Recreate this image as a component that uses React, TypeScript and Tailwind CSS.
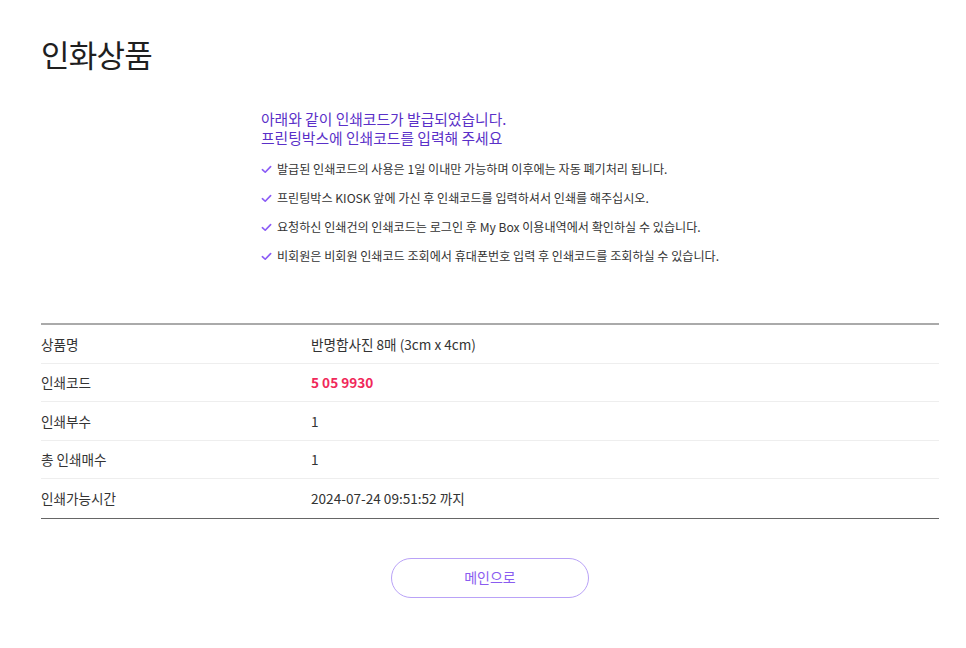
import React from 'react';

const notices = [
    '발급된 인쇄코드의 사용은 1일 이내만 가능하며 이후에는 자동 폐기처리 됩니다.',
    '프린팅박스 KIOSK 앞에 가신 후 인쇄코드를 입력하셔서 인쇄를 해주십시오.',
    '요청하신 인쇄건의 인쇄코드는 로그인 후 My Box 이용내역에서 확인하실 수 있습니다.',
    '비회원은 비회원 인쇄코드 조회에서 휴대폰번호 입력 후 인쇄코드를 조회하실 수 있습니다.',
];

const rows: { label: string; value: string; highlight?: boolean }[] = [
    { label: '상품명', value: '반명함사진 8매 (3cm x 4cm)' },
    { label: '인쇄코드', value: '5 05 9930', highlight: true },
    { label: '인쇄부수', value: '1' },
    { label: '총 인쇄매수', value: '1' },
    { label: '인쇄가능시간', value: '2024-07-24 09:51:52 까지' },
];

const Check = () => (
    <svg viewBox="0 0 12 12" className="w-[11px] h-[11px] flex-shrink-0 mt-[1px]" fill="none">
        <path d="M1.5 6.2 L4.6 9 L10.5 2.8" stroke="#8b5cf6" strokeWidth="1.8" strokeLinecap="round" strokeLinejoin="round" />
    </svg>
);

export default function App() {
    return (
        <div className="min-h-screen bg-white text-[#222] font-['Noto_Sans_CJK_KR','Noto_Sans',sans-serif]">
            <div className="ml-[41px] w-[898px] pt-[33px]">
                {/* Title */}
                <h1 className="text-[31px] font-[420] leading-[42px] tracking-tight text-[#1f1f1f]">인화상품</h1>

                {/* Notice */}
                <div className="mx-auto w-fit mt-[34px]">
                    <p className="text-[14.8px] leading-[19px] text-[#5a30c8]">
                        아래와 같이 인쇄코드가 발급되었습니다.
                        <br />
                        프린팅박스에 인쇄코드를 입력해 주세요
                    </p>
                    <ul className="mt-[13px] flex flex-col gap-[11px]">
                        {notices.map((n, i) => (
                            <li key={i} className="flex items-center gap-[5px] text-[12.1px] leading-[18px] text-[#333]">
                                <Check />
                                <span>{n}</span>
                            </li>
                        ))}
                    </ul>
                </div>

                {/* Detail table */}
                <div className="mt-[58px] border-t-2 border-[#aaa] border-b border-b-[#666]">
                    {rows.map((r, i) => (
                        <div
                            key={r.label}
                            className={`flex items-center h-[38.6px] text-[13.6px] ${i < rows.length - 1 ? 'border-b border-[#eee]' : ''}`}
                        >
                            <div className="w-[270px] text-[#333]">{r.label}</div>
                            <div className={r.highlight ? 'font-bold text-[#f0285a]' : 'text-[#333]'}>{r.value}</div>
                        </div>
                    ))}
                </div>

                {/* Button */}
                <div className="flex justify-center mt-[39px]">
                    <button className="w-[198px] h-[40px] rounded-full border border-[#b9a2f7] text-[14px] text-[#8a5cf0] bg-white">
                        메인으로
                    </button>
                </div>
            </div>
        </div>
    );
}
